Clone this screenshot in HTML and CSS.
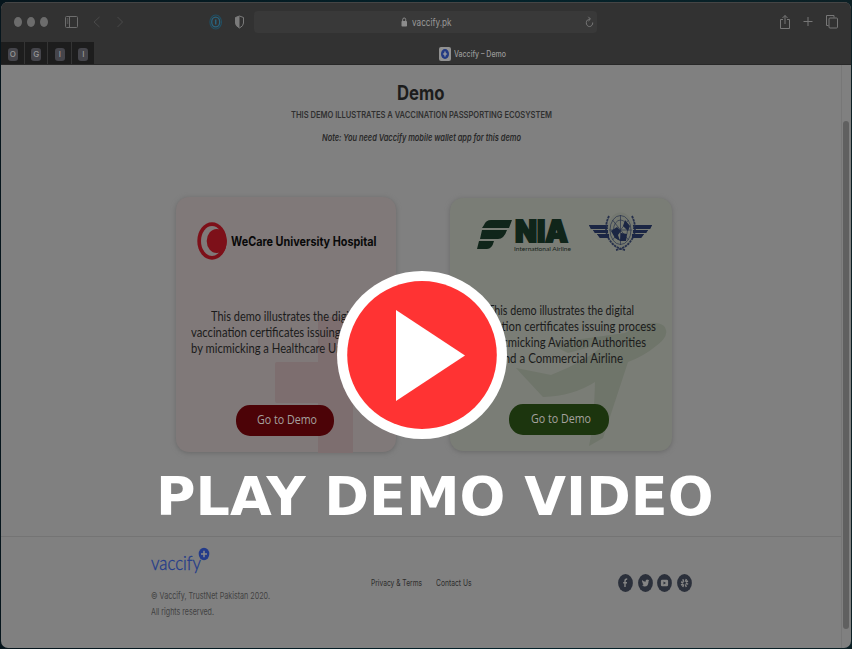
FILE: index.html
```html
<!DOCTYPE html>
<html lang="en">
<head>
<meta charset="utf-8">
<title>Vaccify – Demo</title>
<link rel="stylesheet" href="styles.css">
</head>
<body>
<div class="window">
  <header class="toolbar">
    <div class="lights"><i></i><i></i><i></i></div>
    <svg class="nav-icons" width="66" height="14" viewBox="0 0 66 14" fill="none" stroke="#6d6d6d">
      <rect x="1.500" y="1.500" width="12" height="11" rx="1"/><path d="M5.500 1.500v11M2.800 4h1.500M2.800 6h1.500M2.800 8h1.500"/>
      <path stroke="#4a4a4a" d="M35.500 2l-5.500 5 5.500 5M53.500 2l5 5-5 5"/>
    </svg>
    <svg class="ext-icons" width="36" height="16" viewBox="0 0 36 16" fill="none">
      <ellipse cx="6.700" cy="8" rx="5.800" ry="7" stroke="#214e62" stroke-width="1.100"/><ellipse cx="6.700" cy="8" rx="4" ry="4.900" stroke="#286580" stroke-width="1.300"/><path d="M6.700 5.500v5" stroke="#286580" stroke-width="1.500"/>
      <path d="M30.500 2l4 1.500v5.500q0 3-4 5-4-2-4-5V3.500z" stroke="#7b7b7b"/><path d="M30.500 2v12q-4-2-4-5V3.500z" fill="#7b7b7b"/>
    </svg>
    <div class="address">
      <svg width="7" height="10" viewBox="0 0 7 10"><rect x=".5" y="4" width="5.500" height="5.500" rx=".8" fill="#8c8c8c"/><path d="M1.700 4V2.500q0-1.500 1.500-1.500t1.500 1.500V4" fill="none" stroke="#8c8c8c"/></svg>
      <span class="fit url" data-w="39.500">vaccify.pk</span>
      <svg class="reload" width="9" height="12" viewBox="0 0 9 12" fill="none" stroke="#777"><path d="M5 3.200A3.200 3.700 0 1 0 7.700 6.500M3.300.8l2.200 2.300-2.200 2"/></svg>
    </div>
    <svg class="actions" width="60" height="16" viewBox="0 0 60 16" fill="none" stroke="#777">
      <path d="M4 5.500H1.500v9h9v-9H8M6 10V1.500M3.500 4L6 1.500 8.500 4M24.500 7.500h9M29 3v9"/>
      <path d="M49.500 11.500h-2v-10h7.500v2"/><rect x="50" y="4" width="8.500" height="10" rx="1"/>
    </svg>
  </header>
  <div class="tabs">
    <div class="pins"><div><b>O</b></div><div><b>G</b></div><div><b>I</b></div><div><b>I</b></div></div>
    <div class="active-tab">
      <svg width="12" height="14" viewBox="0 0 12 14"><rect width="12" height="14" rx="2" fill="#919191"/><ellipse cx="6" cy="7" rx="4" ry="5" fill="#233a82"/><path d="M6 4.500v5M3.900 7h4.200" stroke="#a6a6a6" stroke-width="1.200"/></svg>
      <span class="fit" data-w="52">Vaccify – Demo</span>
    </div>
  </div>
  <div class="viewport">
    <div class="page">
      <main>
        <h1 class="fit" data-w="47.500">Demo</h1>
        <p class="fit subtitle" data-w="261">THIS DEMO ILLUSTRATES A VACCINATION PASSPORTING ECOSYSTEM</p>
        <p class="fit note" data-w="199">Note: You need Vaccify mobile wallet app for this demo</p>
        <div class="cards">
          <section class="card hospital">
            <svg class="art" width="220" height="256" viewBox="0 0 220 256"><path d="M142 120h35v136h-35v-50h-41q-2 0-2-2v-37q0-2 2-2h41z" fill="#7d6e6f"/><path d="M177 165h38v41h-38z" fill="#7d6e6f"/></svg>
            <div class="brand">
              <svg width="30" height="38" viewBox="0 0 30 38"><ellipse cx="15" cy="19" rx="14.700" ry="18.700" fill="#7d1019"/><ellipse cx="15" cy="19" rx="11" ry="15" fill="#807979"/><ellipse cx="19.700" cy="19" rx="10" ry="12" fill="#7d1019"/><path d="M24 6q5 4 5.500 13T24 33l-2-5V10z" fill="#7d1019"/></svg>
              <span class="fit" data-w="145.500">WeCare University Hospital</span>
            </div>
            <div class="copy">
              <p class="fit first" data-w="150">This demo illustrates the digital</p>
              <p class="fit" data-w="190">vaccination certificates issuing process</p>
              <p class="fit" data-w="187">by micmicking a Healthcare University</p>
            </div>
            <div class="button"><span class="fit" data-w="60">Go to Demo</span></div>
          </section>
          <section class="card airline">
            <svg class="art" width="222" height="253" viewBox="0 0 222 253"><path d="M66 170L101 177Q135 164 158 144L118 155Q105 149 103 145L175 135Q201 119 214 128 221 137 206 148 194 158 178 164L153 240 139 248Q144 225 145 184 123 198 93 199z" fill="#6f756a"/></svg>
            <div class="brand">
              <svg width="176" height="42" viewBox="0 0 176 42">
                <g fill="#10251a"><path d="M7 8Q9 3 14 3h21l-3 8H5zM5 13h25q-3 9-9 9H3zM2 24h15q-2 8-7 8H0z" transform="translate(0 1)"/></g>
                <text x="38" y="26" textLength="53" lengthAdjust="spacingAndGlyphs" class="nia">NIA</text>
                <text x="37" y="34.500" textLength="57" lengthAdjust="spacingAndGlyphs" class="intl">International Airline</text>
                <g fill="#1b2644"><path d="M112 9h26v4h-24zM116 14h21v3h-19zM120 18h17v4h-14zM175 9h-26v4h24zM171 14h-21v3h19zM167 18h-17v4h14z"/></g>
                <g fill="none" stroke="#26304b" stroke-width=".7"><ellipse cx="143.500" cy="14" rx="13" ry="17.500" fill="#747870" stroke="none"/><ellipse cx="143.500" cy="14" rx="10.500" ry="14.500"/><ellipse cx="143.500" cy="14" rx="7" ry="10"/><path d="M143.500-1v30M132.500 14h22M135.500 4l16 20M151.500 4l-16 20"/></g>
                <path d="M132 0q-6 13 0 23 5 9 16 11M155 0q6 13 0 23-5 9-16 11" fill="none" stroke="#26304b" stroke-width="1.800" stroke-dasharray="2.500 .7"/>
                <path d="M112 9h16l3 4h-17zM116 14h15v3h-13zM120 18h12v4h-9zM175 9h-16l-3 4h17zM171 14h-15v3h13zM167 18h-12v4h9z" fill="#1b2644"/>
                <path d="M134 15l6-4 4 4-3 4 2 6-5-3zM146 10l2-6 5 6-2 5zM144 17l6 1-1 7-6 0z" fill="#1b2644"/>
              </svg>
            </div>
            <div class="copy">
              <p class="fit" data-w="146">This demo illustrates the digital</p>
              <p class="fit" data-w="191">vaccination certificates issuing process</p>
              <p class="fit" data-w="170">by micmicking Aviation Authorities</p>
              <p class="fit" data-w="125">and a Commercial Airline</p>
            </div>
            <div class="button"><span class="fit" data-w="60">Go to Demo</span></div>
          </section>
        </div>
      </main>
      <footer>
        <div class="legal">
          <svg width="60" height="30" viewBox="0 0 60 30">
            <text x="0" y="23" textLength="50" lengthAdjust="spacingAndGlyphs" class="wordmark">vaccify</text>
            <ellipse cx="53" cy="7" rx="5.300" ry="6.200" fill="#233b8a"/><path d="M53 3.700v6.600M50 7h6" stroke="#8b8b8b" stroke-width="1.500"/>
          </svg>
          <p class="fit" data-w="119">© Vaccify, TrustNet Pakistan 2020.</p>
          <p class="fit" data-w="63">All rights reserved.</p>
        </div>
        <nav><span class="fit" data-w="51">Privacy &amp; Terms</span><span class="fit" data-w="35.500">Contact Us</span></nav>
        <div class="social">
          <svg viewBox="0 0 15 18"><ellipse cx="7.500" cy="9" rx="7.400" ry="9"/><path d="M7 13V7q0-2 2.200-2M5.200 8.800h3.800" fill="none" stroke="#858585" stroke-width="1.400"/></svg>
          <svg viewBox="0 0 15 18"><ellipse cx="7.500" cy="9" rx="7.400" ry="9"/><path class="mark" d="M4 6q1.500 1.700 3.500 1.700 0-2.200 1.800-2.200l1 .5 1-.3-.7 1.300q0 5.500-4.100 5.500l-2.500-.7 1.700-.8-1.300-1.300.8-.2q-1.500-1.300-1.200-3.500z"/></svg>
          <svg viewBox="0 0 15 18"><ellipse cx="7.500" cy="9" rx="7.400" ry="9"/><rect class="mark" x="3.900" y="5.800" width="7.200" height="6.500" rx="1.300"/><path d="M6.500 7.400v3.200l2.500-1.600z"/></svg>
          <svg viewBox="0 0 15 18"><ellipse cx="7.500" cy="9" rx="7.400" ry="9"/><path d="M5.800 5.200l1 2.600M8.300 10.400l1 2.600M9.300 5l-.8 2.800M6.600 10.200l-.8 2.800M4 8l2.500.5M8.700 9.500l2.500.7M4 11l2.200-1M8.800 8l2.200-1" fill="none" stroke="#858585" stroke-width="1.400"/></svg>
        </div>
      </footer>
    </div>
    <div class="scrollbar"><div class="thumb"></div></div>
  </div>
</div>
<div class="overlay">
  <svg width="170" height="168" viewBox="0 0 170 168"><ellipse cx="85" cy="84" rx="85" ry="84" fill="#fff"/><ellipse cx="85" cy="84" rx="74.800" ry="74" fill="#f33"/><path d="M59 39v91l69-45.500z" fill="#fff"/></svg>
  <div class="fit play-label" data-w="557.500">PLAY DEMO VIDEO</div>
</div>
<script src="fit.js"></script>
</body>
</html>
```
FILE: styles.css
```css
* { box-sizing: border-box; }
html, body { margin: 0; height: 100%; overflow: hidden; }
body {
  position: relative;
  padding: 2px 1px 1px;
  background: linear-gradient(90deg, #06151c, #03222a 60%, #0c2025);
  font-family: Inter, "Liberation Sans", sans-serif;
}
svg { display: block; flex: none; }
p, h1 { margin: 0; }
.fit { display: block; width: max-content; white-space: nowrap; transform-origin: 0 50%; flex: none; }
.window {
  height: 646px; display: flex; flex-direction: column;
  border-radius: 7px; overflow: hidden; background: #808080;
}
.toolbar {
  height: 40px; display: flex; align-items: center;
  padding: 0 0 2px 13px; background: #323232; border-top: 1px solid #454545;
}
.lights { display: flex; gap: 5px; width: 50px; }
.lights i { width: 8px; height: 10px; border-radius: 50%; background: #6c6c6c; }
.nav-icons { width: 66px; margin-right: 79px; }
.address {
  width: 343px; height: 22px; margin-left: 9px; border-radius: 4px; background: #393939;
  display: flex; align-items: center; padding-left: 147px; color: #9a9a9a;
}
.url { font-size: 10px; margin-left: 4px; }
.reload { margin-left: 133px; }
.actions { margin-left: 182px; }
.tabs { height: 23px; display: flex; background: #323232; border-bottom: 1px solid #282828; }
.pins { display: flex; width: 93px; gap: 1px; background: #343434; }
.pins div { flex: 1; display: flex; align-items: center; justify-content: center; padding: 2px 0 0 1px; background: #1d1d1d; }
.pins b {
  width: 10px; height: 13px; border-radius: 3px; background: #45454b; color: #989898;
  font-size: 8px; font-weight: 500; line-height: 13px; text-align: center;
}
.active-tab {
  flex: 1; display: flex; align-items: center; gap: 3px; padding: 2px 0 0 345px;
  color: #999; font-size: 8.5px; font-weight: 500;
}
.viewport { flex: 1; display: flex; }
.page { width: 840px; display: flex; flex-direction: column; }
main { height: 471px; padding-top: 15px; display: flex; flex-direction: column; align-items: center; }
h1 { font-size: 20px; line-height: 26px; font-weight: 700; color: #1c1c1c; }
.subtitle { font-size: 8.8px; line-height: 18px; font-weight: 600; color: #303030; }
.note { margin-top: 5px; font-size: 9.2px; line-height: 18px; font-weight: 600; font-style: italic; color: #292929; }
.cards { align-self: stretch; display: flex; gap: 54px; padding: 50px 0 0 174.5px; }
.card { position: relative; border-radius: 13px; box-shadow: 0 1px 5px #686868; }
.hospital { width: 220px; height: 255px; background: #807979; }
.airline { width: 222px; height: 253px; margin-top: 1px; background: #7a7d76; }
.art { position: absolute; left: 0; top: 0; border-radius: 13px; }
.brand { position: relative; display: flex; align-items: center; }
.hospital .brand { height: 38px; margin: 25px 0 0 21px; gap: 4px; font-size: 12.5px; font-weight: 700; color: #090909; }
.airline .brand { margin: 18px 0 0 27px; }
.airline .brand svg { overflow: visible; }
.nia { font: 900 30px Inter, sans-serif; fill: #10251a; stroke: #10251a; stroke-width: 1.8px; }
.intl { font: 6.5px Lato, sans-serif; fill: #17231c; }
.copy {
  position: relative; display: flex; flex-direction: column; align-items: center;
  font: 13.8px/16px Lato, "Liberation Sans", sans-serif; color: #1b1b1b;
}
.hospital .copy { height: 90px; margin-top: 48px; align-items: flex-start; padding-left: 15px; }
.hospital .first { margin-left: 20px; }
.airline .copy { height: 104px; margin-top: 44px; }
.button {
  position: relative; width: 98px; height: 31px; border-radius: 14px / 15px; padding: 0 0 3px 4px;
  display: flex; align-items: center; justify-content: center;
  font: 13px "Open Sans", sans-serif; color: #a5a19f;
}
.hospital .button { margin: 7px 0 0 60px; background: #4c0307; }
.airline .button { width: 100px; margin: -2px 0 0 59px; background: #1c350e; }
footer { flex: 1; display: flex; border-top: 1px solid #747474; padding-left: 150px; }
.legal { width: 220px; padding-top: 10px; font-size: 9.3px; line-height: 16px; color: #424242; }
.legal svg { margin-bottom: 11px; }
.wordmark { font: 300 19px Lato, sans-serif; fill: #233b8a; stroke: #233b8a; stroke-width: .35px; }
nav { width: 247px; padding-top: 38px; display: flex; gap: 14px; font-size: 9px; line-height: 16px; color: #2c2c2c; }
.social { display: flex; gap: 4.500px; padding-top: 37px; }
.social svg { width: 15px; height: 18px; fill: #2b303b; }
.social .mark { fill: #858585; }
.scrollbar { width: 10px; border-left: 1px solid #777; padding: 56px 0 0 1px; }
.thumb { width: 6px; height: 508px; border-radius: 3px; background: #606060; }
.overlay { position: absolute; inset: 0; padding-top: 271px; }
.overlay svg { margin-left: 337px; }
.play-label {
  margin: 26px 0 0 156px; font: bold 54px/64px "DejaVu Sans", sans-serif; color: #fff;
}
```
FILE: fit.js
```js
document.querySelectorAll('.fit').forEach(function (el) {
  var natural = el.getBoundingClientRect().width;
  var target = parseFloat(el.dataset.w);
  var indent = parseFloat(getComputedStyle(el).marginRight) || 0;
  el.style.transform = 'scaleX(' + target / natural + ')';
  el.style.marginRight = (indent + target - natural) + 'px';
});
```
